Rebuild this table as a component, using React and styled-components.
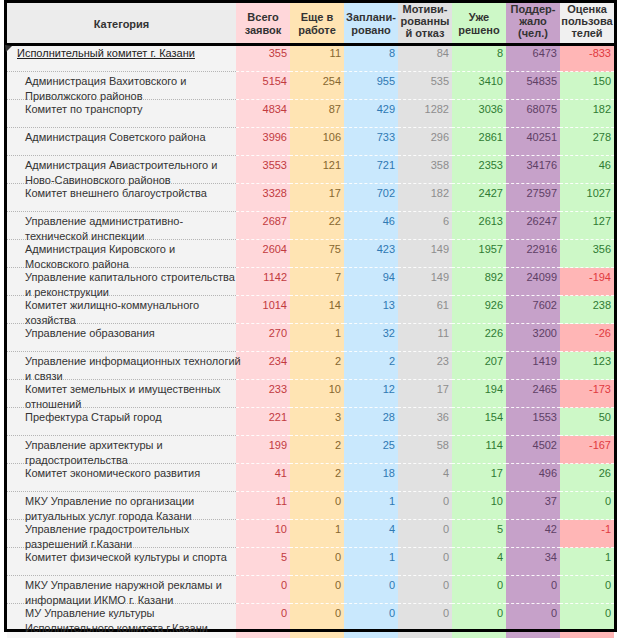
import React from 'react'
import styled, { createGlobalStyle } from 'styled-components'

const GlobalStyle = createGlobalStyle`
  html, body {
    margin: 0;
    padding: 0;
    background: #fff;
  }
  body {
    font-family: 'Liberation Sans', Arial, sans-serif;
    font-size: 11px;
    color: #333;
  }
`

const columns = [
  { key: 'total', title: ['Всего', 'заявок'], bg: '#ffd7da', color: '#c23a3f' },
  { key: 'work', title: ['Еще в', 'работе'], bg: '#ffe4b3', color: '#86672f' },
  { key: 'plan', title: ['Заплани-', 'ровано'], bg: '#c9e8fd', color: '#2f79b3' },
  { key: 'refuse', title: ['Мотиви-', 'рованны', 'й отказ'], bg: '#e1e1e1', color: '#8d8d8d' },
  { key: 'done', title: ['Уже', 'решено'], bg: '#cdf8c7', color: '#2f7b33' },
  { key: 'support', title: ['Поддер-', 'жало', '(чел.)'], bg: '#c6a1c9', color: '#5e4065' },
  { key: 'rating', title: ['Оценка', 'пользова', 'телей'], bg: '#f0f0f0', color: '#2f7b33' },
]

const ratingGood = { bg: '#cdf8c7', color: '#2f7b33' }
const ratingBad = { bg: '#ffb6b6', color: '#df3a3f' }

const rows = [
  [['Исполнительный комитет г. Казани'], 355, 11, 8, 84, 8, 6473, -833],
  [['Администрация Вахитовского и', 'Приволжского районов'], 5154, 254, 955, 535, 3410, 54835, 150],
  [['Комитет по транспорту'], 4834, 87, 429, 1282, 3036, 68075, 182],
  [['Администрация Советского района'], 3996, 106, 733, 296, 2861, 40251, 278],
  [['Администрация Авиастроительного и', 'Ново-Савиновского районов'], 3553, 121, 721, 358, 2353, 34176, 46],
  [['Комитет внешнего благоустройства'], 3328, 17, 702, 182, 2427, 27597, 1027],
  [['Управление административно-', 'технической инспекции'], 2687, 22, 46, 6, 2613, 26247, 127],
  [['Администрация Кировского и', 'Московского района'], 2604, 75, 423, 149, 1957, 22916, 356],
  [['Управление капитального строительства', 'и реконструкции'], 1142, 7, 94, 149, 892, 24099, -194],
  [['Комитет жилищно-коммунального', 'хозяйства'], 1014, 14, 13, 61, 926, 7602, 238],
  [['Управление образования'], 270, 1, 32, 11, 226, 3200, -26],
  [['Управление информационных технологий', 'и связи'], 234, 2, 2, 23, 207, 1419, 123],
  [['Комитет земельных и имущественных', 'отношений'], 233, 10, 12, 17, 194, 2465, -173],
  [['Префектура Старый город'], 221, 3, 28, 36, 154, 1553, 50],
  [['Управление архитектуры и', 'градостроительства'], 199, 2, 25, 58, 114, 4502, -167],
  [['Комитет экономического развития'], 41, 2, 18, 4, 17, 496, 26],
  [['МКУ Управление по организации', 'ритуальных услуг города Казани'], 11, 0, 1, 0, 10, 37, 0],
  [['Управление градостроительных', 'разрешений г.Казани'], 10, 1, 4, 0, 5, 42, -1],
  [['Комитет физической культуры и спорта'], 5, 0, 1, 0, 4, 34, 1],
  [['МКУ Управление наружной рекламы и', 'информации ИКМО г. Казани'], 0, 0, 0, 0, 0, 0, 0],
  [['МУ Управление культуры', 'Исполнительного комитета г.Казани'], 0, 0, 0, 0, 0, 0, 0],
]

function cellColors(col, value) {
  if (col.key !== 'rating') return col
  return value < 0 ? ratingBad : ratingGood
}

export default function App() {
  const last = rows.length - 1

  return (
    <>
      <GlobalStyle />
      <Page>
        <Frame>
          <Table>
            <colgroup>
              <col style={{ width: 229 }} />
              {columns.map((col) => (
                <col key={col.key} style={{ width: 54 }} />
              ))}
            </colgroup>
            <thead>
              <tr>
                <HeadCell $bg="#ececec">Категория</HeadCell>
                {columns.map((col) => (
                  <HeadCell key={col.key} $bg={col.bg} $tight={col.title.length > 2}>
                    {col.title.map((line, i) => (
                      <React.Fragment key={i}>
                        {i > 0 && <br />}
                        {line}
                      </React.Fragment>
                    ))}
                  </HeadCell>
                ))}
              </tr>
            </thead>
            <tbody>
              {rows.map(([name, ...values], idx) => {
                const isParent = idx === 0
                const isLast = idx === last
                const boxHeight = isParent || isLast ? 25 : 27
                return (
                  <tr key={idx}>
                    <NameCell $last={isLast}>
                      <NameBox $h={boxHeight} $parent={isParent}>
                        {isParent && (
                          <Marker width="8" height="8" viewBox="0 0 8 8">
                            <polygon points="0,0 7,1 1,7" fill="#333" />
                          </Marker>
                        )}
                        {name.map((line, i) => (
                          <NameLine key={i} $parent={isParent}>
                            {line}
                          </NameLine>
                        ))}
                      </NameBox>
                    </NameCell>
                    {columns.map((col, i) => {
                      const c = cellColors(col, values[i])
                      return (
                        <NumCell key={col.key} $bg={c.bg} $color={c.color} $last={isLast}>
                          <NumBox $h={boxHeight} $parent={isParent}>
                            {values[i]}
                          </NumBox>
                        </NumCell>
                      )
                    })}
                  </tr>
                )
              })}
            </tbody>
          </Table>
        </Frame>

        <StubRow>
          <StubCell $bg="#f6f6f6" />
          {columns.map((col) => (
            <StubCell key={col.key} $bg={col.key === 'rating' ? ratingBad.bg : col.bg} />
          ))}
        </StubRow>
      </Page>
    </>
  )
}

const Page = styled.div`
  width: 617px;
  padding-left: 4px;
  box-sizing: border-box;
`

const Frame = styled.div`
  width: 607px;
  border: 3px solid #000;
`

const Table = styled.table`
  width: 607px;
  table-layout: fixed;
  border-collapse: separate;
  border-spacing: 0;
  font-size: 11px;
`

const HeadCell = styled.th`
  height: 41px;
  padding: ${(p) => (p.$tight ? '0 0 4px' : '2px 0 0')};
  box-sizing: border-box;
  background: ${(p) => p.$bg};
  border-bottom: 3px solid #000;
  text-align: center;
  vertical-align: middle;
  font-weight: bold;
  font-size: 11px;
  line-height: ${(p) => (p.$tight ? 12 : 13)}px;
  color: #333;
  white-space: nowrap;
`

const NameCell = styled.td`
  padding: 0;
  vertical-align: top;
  background: #f3f3f3;
  border-bottom: ${(p) => (p.$last ? 'none' : '1px dotted #b5b5b5')};
`

const NameBox = styled.div`
  position: ${(p) => (p.$parent ? 'relative' : 'static')};
  height: ${(p) => p.$h}px;
  box-sizing: border-box;
  padding: ${(p) => (p.$parent ? '0 0 0 10px' : '2px 0 0 18px')};
  line-height: 15px;
  white-space: nowrap;
`

const NameLine = styled.div`
  text-decoration: ${(p) => (p.$parent ? 'underline' : 'none')};
  color: ${(p) => (p.$parent ? '#222' : '#333')};
`

const Marker = styled.svg`
  position: absolute;
  left: -2px;
  top: -1px;
`

const NumCell = styled.td`
  padding: 0;
  vertical-align: top;
  background: ${(p) => p.$bg};
  color: ${(p) => p.$color};
  border-bottom: ${(p) => (p.$last ? 'none' : '1px dashed rgba(255, 255, 255, 0.9)')};
`

const NumBox = styled.div`
  height: ${(p) => p.$h}px;
  box-sizing: border-box;
  padding: ${(p) => (p.$parent ? '0 3px 0 0' : '2px 3px 0 0')};
  text-align: right;
  line-height: 15px;
`

const StubRow = styled.div`
  display: grid;
  grid-template-columns: 229px repeat(7, 54px);
  height: 6px;
  margin-left: 3px;
  width: 607px;
`

const StubCell = styled.div`
  background: ${(p) => p.$bg};
`
